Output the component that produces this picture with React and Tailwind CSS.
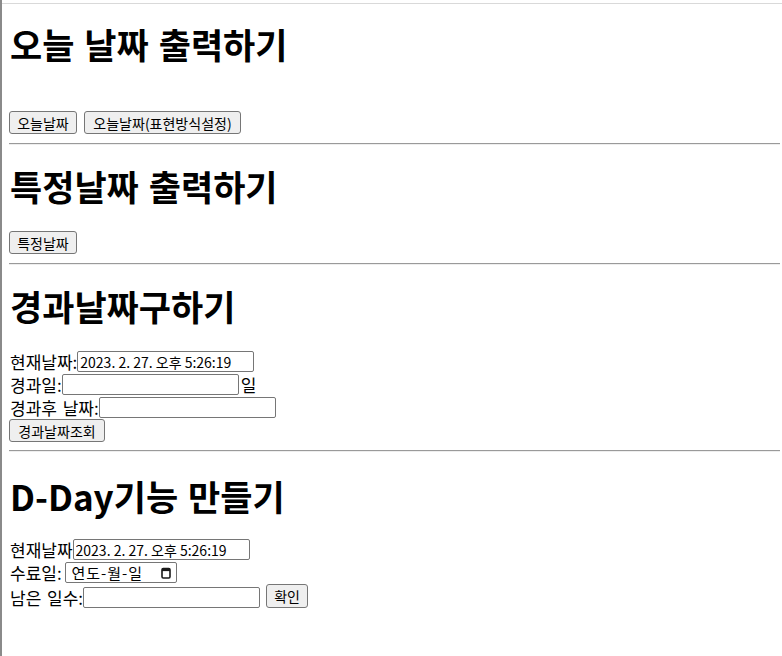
import React from 'react';

const btn =
  'h-[23px] border border-[#767676] bg-[#efefef] rounded-[3px] text-[14px] leading-none text-black flex items-center justify-center';
const field =
  'h-[21px] w-[177px] border border-[#767676] rounded-[2px] px-[2px] text-[14px] leading-none text-black bg-white outline-none';

const Divider = ({ className }) => (
  <div className={`h-[2px] border-t border-t-[#9a9a9a] border-b border-b-[#eeeeee] ${className}`} />
);

const CalendarIcon = () => (
  <svg width="10" height="12" viewBox="0 0 10 12" fill="none">
    <rect x="1" y="1.5" width="8" height="9.5" rx="1.2" stroke="#1a1a1a" strokeWidth="1.6" />
    <rect x="1" y="1.5" width="8" height="2.6" fill="#1a1a1a" />
  </svg>
);

const heading = 'ml-px text-[35px] leading-[32px] font-bold whitespace-nowrap [word-spacing:2px]';

export default function App() {
  return (
    <div className="h-[656px] w-[782px] overflow-hidden bg-white flex font-['Noto_Sans_CJK_KR',sans-serif] text-black">
      <div className="w-[2px] bg-[#8a8a8a]" />
      <div className="flex-1 flex flex-col">
        <div className="h-[3px]" />
        <div className="h-px bg-[#d9d9d9]" />

        <div className="pl-[7px] pr-[2px] flex flex-col">
          {/* 오늘 날짜 */}
          <h1 className={`mt-[24px] ${heading}`}>오늘 날짜 출력하기</h1>
          <div className="mt-[51px] flex gap-[7px]">
            <button className={`${btn} w-[68px]`}>오늘날짜</button>
            <button className={`${btn} w-[157px]`}>오늘날짜(표현방식설정)</button>
          </div>
          <Divider className="mt-[9px]" />

          {/* 특정 날짜 */}
          <h2 className={`mt-[25px] ${heading}`}>특정날짜 출력하기</h2>
          <div className="mt-[29px] flex">
            <button className={`${btn} w-[68px]`}>특정날짜</button>
          </div>
          <Divider className="mt-[9px]" />

          {/* 경과 날짜 */}
          <h2 className={`mt-[25px] ${heading}`}>경과날짜구하기</h2>
          <div className="mt-[28px] flex flex-col text-[17px] leading-none">
            <div className="h-[23px] flex items-center pl-px">
              <span>현재날짜:</span>
              <input readOnly className={field} value="2023. 2. 27. 오후 5:26:19" />
            </div>
            <div className="h-[23px] flex items-center pl-px">
              <span>경과일:</span>
              <input readOnly className={field} value="" />
              <span className="ml-[2px]">일</span>
            </div>
            <div className="h-[23px] flex items-center pl-px">
              <span className="[word-spacing:2px]">경과후 날짜:</span>
              <input readOnly className={field} value="" />
            </div>
            <div className="flex">
              <button className={`${btn} w-[96px]`}>경과날짜조회</button>
            </div>
          </div>
          <Divider className="mt-[8px]" />

          {/* D-Day */}
          <h2 className={`mt-[28px] ${heading}`}>D-Day기능 만들기</h2>
          <div className="mt-[26px] flex flex-col text-[17px] leading-none">
            <div className="h-[23px] flex items-center pl-px">
              <span>현재날짜</span>
              <input readOnly className={field} value="2023. 2. 27. 오후 5:26:19" />
            </div>
            <div className="h-[23px] flex items-center pl-px">
              <span>수료일:&nbsp;</span>
              <div className="h-[21px] w-[112px] border border-[#767676] rounded-[2px] pl-[5px] pr-[5px] flex items-center justify-between bg-white">
                <span className="text-[15px] tracking-[1px]">연도-월-일</span>
                <CalendarIcon />
              </div>
            </div>
            <div className="h-[24px] flex items-end pl-px">
              <span className="mb-[2px] [word-spacing:2px]">남은 일수:</span>
              <input readOnly className={field} value="" />
              <button className={`${btn} h-[24px] w-[42px] ml-[6px]`}>확인</button>
            </div>
          </div>
        </div>
      </div>
    </div>
  );
}
